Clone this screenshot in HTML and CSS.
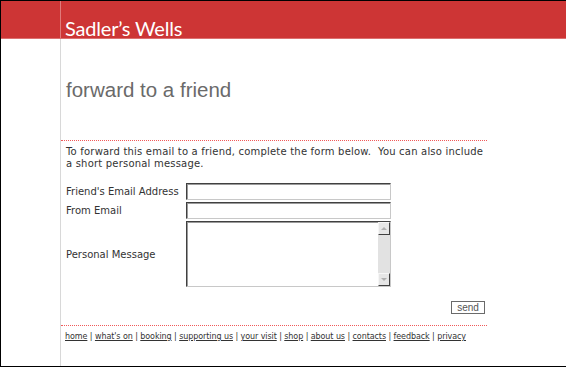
FILE: index.html
```html
<!DOCTYPE html>
<html lang="en">
<head>
<meta charset="utf-8">
<title>Sadler's Wells - forward to a friend</title>
<link rel="stylesheet" href="styles.css">
</head>
<body>
<div class="page">
  <header class="masthead">
    <div class="mast-gutter"></div>
    <div class="brand">Sadler’s Wells</div>
  </header>
  <div class="main">
    <div class="gutter"></div>
    <div class="content">
      <h1 class="title">forward to a friend</h1>
      <div class="rule"></div>
      <p class="intro">To forward this email to a friend, complete the form below.&nbsp; You can also include a short personal message.</p>
      <form class="form">
        <label class="label" for="f1">Friend's Email Address</label>
        <input class="field" id="f1" type="text">
        <label class="label" for="f2">From Email</label>
        <input class="field" id="f2" type="text">
        <label class="label" for="f3">Personal Message</label>
        <div class="textbox">
          <textarea class="textarea" id="f3"></textarea>
          <div class="scrollbar">
            <div class="sb-btn"><span class="arrow-up"></span></div>
            <div class="sb-track"></div>
            <div class="sb-btn"><span class="arrow-down"></span></div>
          </div>
        </div>
        <div class="actions"><button class="send" type="button">send</button></div>
      </form>
      <div class="rule"></div>
      <nav class="footer">
        <a href="#">home</a> | <a href="#">what's on</a> | <a href="#">booking</a> | <a href="#">supporting us</a> | <a href="#">your visit</a> | <a href="#">shop</a> | <a href="#">about us</a> | <a href="#">contacts</a> | <a href="#">feedback</a> | <a href="#">privacy</a>
      </nav>
    </div>
  </div>
</div>
</body>
</html>
```
FILE: styles.css
```css
html, body {
  margin: 0;
  padding: 0;
  background: #fff;
}
.page {
  width: 566px;
  height: 367px;
  box-sizing: border-box;
  border-top: 1px solid #000;
  border-left: 1px solid #000;
  border-bottom: 1px solid #000;
  display: flex;
  flex-direction: column;
  overflow: hidden;
}
.masthead {
  height: 37px;
  flex: none;
  background: #cd3535;
  border-bottom: 1px solid #dc7070;
  display: flex;
  align-items: flex-end;
}
.mast-gutter {
  width: 59px;
  height: 37px;
  border-right: 1px solid #e07a7a;
}
.brand {
  padding-left: 4px;
  font-family: Lato, "Open Sans", sans-serif;
  font-size: 20px;
  line-height: 20px;
  color: #fff;
  letter-spacing: -0.2px;
}
.main {
  flex: 1;
  display: flex;
}
.gutter {
  width: 59px;
  flex: none;
}
.content {
  width: 426px;
  flex: none;
  border-left: 1px solid #d8d8d8;
  font-family: "DejaVu Sans", Verdana, sans-serif;
  color: #333;
}
.title {
  margin: 39px 0 39px 5px;
  font-family: "Liberation Sans", Arial, sans-serif;
  font-weight: normal;
  font-size: 20.5px;
  line-height: 23px;
  color: #6a6a6a;
}
.rule {
  border-top: 1px dotted #f05a5a;
}
.intro {
  margin: 5px 0 13px 5px;
  font-size: 10px;
  line-height: 12px;
  letter-spacing: 0.2px;
  width: 418px;
}
.form {
  margin-left: 5px;
  display: grid;
  grid-template-columns: 120px 205px;
  row-gap: 2px;
  align-items: center;
  font-size: 10px;
}
.label {
  color: #333;
}
.field {
  box-sizing: border-box;
  width: 205px;
  height: 17px;
  margin: 0;
  padding: 0 2px;
  border-style: solid;
  border-width: 1px;
  border-color: #404040 #c8c8c8 #c8c8c8 #404040;
  box-shadow: inset 1px 1px 0 #9a9a9a;
  background: #fff;
}
.textbox {
  box-sizing: border-box;
  width: 205px;
  height: 66px;
  display: flex;
  border-style: solid;
  border-width: 1px;
  border-color: #404040 #c8c8c8 #c8c8c8 #404040;
  box-shadow: inset 1px 1px 0 #9a9a9a;
}
.textarea {
  flex: 1;
  border: none;
  margin: 0;
  padding: 2px;
  resize: none;
  background: transparent;
  outline: none;
}
.scrollbar {
  width: 12px;
  display: flex;
  flex-direction: column;
  background: #e2e2e2;
}
.sb-track {
  flex: 1;
}
.sb-btn {
  box-sizing: border-box;
  height: 13px;
  background: #e6e6e6;
  border-style: solid;
  border-width: 1px;
  border-color: #f6f6f6 #404040 #404040 #f6f6f6;
  display: flex;
  align-items: center;
  justify-content: center;
}
.arrow-up {
  width: 0;
  height: 0;
  border-left: 3px solid transparent;
  border-right: 3px solid transparent;
  border-bottom: 3px solid #b0b0b0;
}
.arrow-down {
  width: 0;
  height: 0;
  border-left: 3px solid transparent;
  border-right: 3px solid transparent;
  border-top: 3px solid #b0b0b0;
}
.actions {
  grid-column: 1 / 3;
  width: 419px;
  display: flex;
  justify-content: flex-end;
  margin-top: 12px;
  margin-bottom: 11px;
}
.send {
  box-sizing: border-box;
  width: 34px;
  height: 13px;
  margin: 0;
  padding: 0;
  border: 1px solid #6a6a6a;
  background: #fff;
  font-family: "Liberation Sans", Arial, sans-serif;
  font-size: 10px;
  line-height: 10px;
  color: #555;
}
.footer {
  margin: 5px 0 0 4px;
  font-size: 8px;
  line-height: 11px;
  letter-spacing: -0.08px;
  color: #333;
  white-space: nowrap;
}
.footer a {
  color: #333;
  text-decoration: underline;
}
```
